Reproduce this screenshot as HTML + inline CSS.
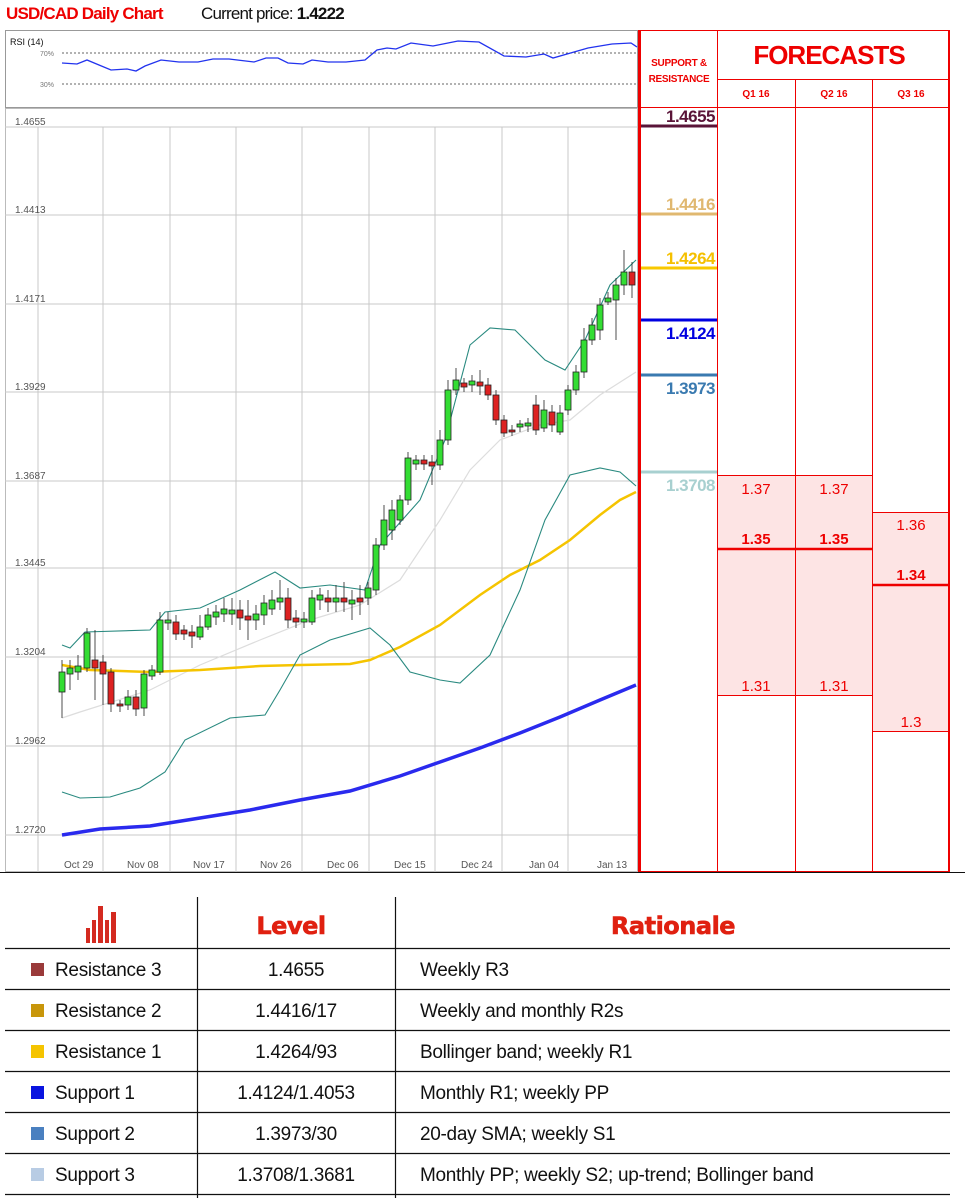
<!DOCTYPE html>
<html><head><meta charset="utf-8"><style>
body{margin:0;background:#fff;width:965px;height:1198px;overflow:hidden;font-family:"Liberation Sans",sans-serif;position:relative}
.a{position:absolute}
</style></head><body>
<div class="a" style="left:6px;top:4px;font-size:17px;color:#e00;font-weight:bold;letter-spacing:-0.8px">USD/CAD Daily Chart</div>
<div class="a" style="left:201px;top:4px;font-size:17px;color:#111;letter-spacing:-0.8px">Current price: <b>1.4222</b></div>
<svg class="a" style="left:0;top:0" width="965" height="880" xmlns="http://www.w3.org/2000/svg">
<rect x="5.5" y="30.5" width="632" height="77" fill="#fff" stroke="#999"/>
<text x="10" y="45" font-size="9" font-family="Liberation Sans" fill="#111">RSI (14)</text>
<text x="40" y="56" font-size="7" fill="#777" font-family="Liberation Sans">70%</text>
<text x="40" y="87" font-size="7" fill="#777" font-family="Liberation Sans">30%</text>
<line x1="62" y1="53" x2="637" y2="53" stroke="#666" stroke-dasharray="2,2"/>
<line x1="62" y1="84" x2="637" y2="84" stroke="#666" stroke-dasharray="2,2"/>
<polyline fill="none" stroke="#2233ee" stroke-width="1.3" points="62,63 77,64 87,60 99,65 111,70 127,69 136,71 145,66 161,60 179,62 198,62 213,59 229,59 254,62 266,58 278,58 288,63 303,64 312,60 328,62 346,62 365,60 377,50 387,48 396,49 411,43 433,46 458,41 479,42 504,56 526,57 544,54 553,58 588,48 612,44 631,43 637,47"/>
<rect x="5.5" y="108.5" width="632" height="763" fill="#fff" stroke="#bbb"/>
<g stroke="#c8c8c8" stroke-width="1">
<line x1="5" y1="127" x2="637" y2="127"/><line x1="5" y1="215" x2="637" y2="215"/><line x1="5" y1="304" x2="637" y2="304"/><line x1="5" y1="392" x2="637" y2="392"/><line x1="5" y1="481" x2="637" y2="481"/><line x1="5" y1="568" x2="637" y2="568"/><line x1="5" y1="657" x2="637" y2="657"/><line x1="5" y1="746" x2="637" y2="746"/><line x1="5" y1="835" x2="637" y2="835"/>
<line x1="38" y1="127" x2="38" y2="872"/><line x1="103" y1="127" x2="103" y2="872"/><line x1="170" y1="127" x2="170" y2="872"/><line x1="236" y1="127" x2="236" y2="872"/><line x1="302" y1="127" x2="302" y2="872"/><line x1="369" y1="127" x2="369" y2="872"/><line x1="435" y1="127" x2="435" y2="872"/><line x1="502" y1="127" x2="502" y2="872"/><line x1="568" y1="127" x2="568" y2="872"/>
</g>
<g font-size="10" fill="#555" font-family="Liberation Sans">
<text x="15" y="125">1.4655</text><text x="15" y="213">1.4413</text><text x="15" y="302">1.4171</text><text x="15" y="390">1.3929</text><text x="15" y="479">1.3687</text><text x="15" y="566">1.3445</text><text x="15" y="655">1.3204</text><text x="15" y="744">1.2962</text><text x="15" y="833">1.2720</text>
<text x="64" y="868">Oct 29</text><text x="127" y="868">Nov 08</text><text x="193" y="868">Nov 17</text><text x="260" y="868">Nov 26</text><text x="327" y="868">Dec 06</text><text x="394" y="868">Dec 15</text><text x="461" y="868">Dec 24</text><text x="529" y="868">Jan 04</text><text x="597" y="868">Jan 13</text>
</g>
<polyline fill="none" stroke="#2a2aee" stroke-width="3.5" points="62,835 100,829 150,826 200,818 250,810 300,800 350,791 400,776 440,762 480,748 520,733 560,717 600,700 636,685"/>
<polyline fill="none" stroke="#ddd" stroke-width="1.2" points="62,718 80,712 150,690 200,665 260,640 310,620 360,605 400,580 440,520 470,470 500,440 540,425 570,420 600,395 636,372"/>
<polyline fill="none" stroke="#f5c400" stroke-width="2.5" points="62,665 90,670 150,672 200,670 260,666 300,665 350,664 370,660 400,647 440,625 480,595 510,575 540,560 570,540 600,515 620,500 636,492"/>
<polyline fill="none" stroke="#2a8a80" stroke-width="1.1" points="62,645 70,648 85,632 150,630 165,612 200,608 240,590 275,572 300,588 330,585 365,590 380,545 420,500 445,440 470,345 490,328 515,330 545,360 565,370 585,340 610,285 636,260"/>
<polyline fill="none" stroke="#2a8a80" stroke-width="1.1" points="62,792 80,798 110,797 140,788 165,772 185,740 230,718 265,715 280,690 300,655 330,640 370,628 390,645 410,672 440,680 460,683 490,655 520,590 545,520 570,475 600,468 620,472 636,486"/>
</svg>
<svg class="a" style="left:0;top:0" width="640" height="880" xmlns="http://www.w3.org/2000/svg">
<g stroke="#222" stroke-width="0.8">
<line x1="62" y1="660" x2="62" y2="718"/><rect x="59" y="672" width="6" height="20" fill="#3d3"/>
<line x1="70" y1="660" x2="70" y2="690"/><rect x="67" y="668" width="6" height="6" fill="#3d3"/>
<line x1="78" y1="655" x2="78" y2="680"/><rect x="75" y="666" width="6" height="6" fill="#3d3"/>
<line x1="87" y1="628" x2="87" y2="672"/><rect x="84" y="633" width="6" height="35" fill="#3d3"/>
<line x1="95" y1="630" x2="95" y2="700"/><rect x="92" y="660" width="6" height="8" fill="#d22"/>
<line x1="103" y1="655" x2="103" y2="705"/><rect x="100" y="662" width="6" height="12" fill="#d22"/>
<line x1="111" y1="668" x2="111" y2="712"/><rect x="108" y="672" width="6" height="32" fill="#d22"/>
<line x1="120" y1="700" x2="120" y2="712"/><rect x="117" y="704" width="6" height="2" fill="#d22"/>
<line x1="128" y1="690" x2="128" y2="710"/><rect x="125" y="697" width="6" height="8" fill="#3d3"/>
<line x1="136" y1="690" x2="136" y2="716"/><rect x="133" y="697" width="6" height="12" fill="#d22"/>
<line x1="144" y1="670" x2="144" y2="716"/><rect x="141" y="674" width="6" height="34" fill="#3d3"/>
<line x1="152" y1="665" x2="152" y2="680"/><rect x="149" y="670" width="6" height="6" fill="#3d3"/>
<line x1="160" y1="612" x2="160" y2="675"/><rect x="157" y="620" width="6" height="52" fill="#3d3"/>
<line x1="168" y1="612" x2="168" y2="630"/><rect x="165" y="620" width="6" height="3" fill="#3d3"/>
<line x1="176" y1="615" x2="176" y2="640"/><rect x="173" y="622" width="6" height="12" fill="#d22"/>
<line x1="184" y1="625" x2="184" y2="640"/><rect x="181" y="630" width="6" height="4" fill="#d22"/>
<line x1="192" y1="625" x2="192" y2="648"/><rect x="189" y="632" width="6" height="4" fill="#d22"/>
<line x1="200" y1="615" x2="200" y2="640"/><rect x="197" y="627" width="6" height="10" fill="#3d3"/>
<line x1="208" y1="608" x2="208" y2="630"/><rect x="205" y="615" width="6" height="12" fill="#3d3"/>
<line x1="216" y1="605" x2="216" y2="625"/><rect x="213" y="612" width="6" height="5" fill="#3d3"/>
<line x1="224" y1="598" x2="224" y2="622"/><rect x="221" y="609" width="6" height="5" fill="#3d3"/>
<line x1="232" y1="598" x2="232" y2="625"/><rect x="229" y="610" width="6" height="4" fill="#3d3"/>
<line x1="240" y1="600" x2="240" y2="630"/><rect x="237" y="610" width="6" height="8" fill="#d22"/>
<line x1="248" y1="600" x2="248" y2="640"/><rect x="245" y="616" width="6" height="4" fill="#d22"/>
<line x1="256" y1="605" x2="256" y2="630"/><rect x="253" y="614" width="6" height="6" fill="#3d3"/>
<line x1="264" y1="595" x2="264" y2="625"/><rect x="261" y="603" width="6" height="12" fill="#3d3"/>
<line x1="272" y1="590" x2="272" y2="615"/><rect x="269" y="600" width="6" height="9" fill="#3d3"/>
<line x1="280" y1="580" x2="280" y2="610"/><rect x="277" y="598" width="6" height="4" fill="#3d3"/>
<line x1="288" y1="588" x2="288" y2="628"/><rect x="285" y="598" width="6" height="22" fill="#d22"/>
<line x1="296" y1="610" x2="296" y2="628"/><rect x="293" y="618" width="6" height="4" fill="#d22"/>
<line x1="304" y1="612" x2="304" y2="628"/><rect x="301" y="619" width="6" height="3" fill="#3d3"/>
<line x1="312" y1="590" x2="312" y2="625"/><rect x="309" y="598" width="6" height="24" fill="#3d3"/>
<line x1="320" y1="588" x2="320" y2="610"/><rect x="317" y="595" width="6" height="5" fill="#3d3"/>
<line x1="328" y1="590" x2="328" y2="612"/><rect x="325" y="598" width="6" height="4" fill="#d22"/>
<line x1="336" y1="585" x2="336" y2="612"/><rect x="333" y="598" width="6" height="4" fill="#3d3"/>
<line x1="344" y1="582" x2="344" y2="612"/><rect x="341" y="598" width="6" height="4" fill="#d22"/>
<line x1="352" y1="590" x2="352" y2="620"/><rect x="349" y="600" width="6" height="4" fill="#3d3"/>
<line x1="360" y1="585" x2="360" y2="615"/><rect x="357" y="598" width="6" height="4" fill="#d22"/>
<line x1="368" y1="582" x2="368" y2="605"/><rect x="365" y="588" width="6" height="10" fill="#3d3"/>
<line x1="376" y1="538" x2="376" y2="595"/><rect x="373" y="545" width="6" height="45" fill="#3d3"/>
<line x1="384" y1="505" x2="384" y2="550"/><rect x="381" y="520" width="6" height="25" fill="#3d3"/>
<line x1="392" y1="500" x2="392" y2="540"/><rect x="389" y="510" width="6" height="20" fill="#3d3"/>
<line x1="400" y1="495" x2="400" y2="525"/><rect x="397" y="500" width="6" height="20" fill="#3d3"/>
<line x1="408" y1="452" x2="408" y2="505"/><rect x="405" y="458" width="6" height="42" fill="#3d3"/>
<line x1="416" y1="455" x2="416" y2="470"/><rect x="413" y="460" width="6" height="4" fill="#3d3"/>
<line x1="424" y1="455" x2="424" y2="470"/><rect x="421" y="460" width="6" height="4" fill="#d22"/>
<line x1="432" y1="455" x2="432" y2="485"/><rect x="429" y="462" width="6" height="4" fill="#d22"/>
<line x1="440" y1="430" x2="440" y2="470"/><rect x="437" y="440" width="6" height="25" fill="#3d3"/>
<line x1="448" y1="380" x2="448" y2="445"/><rect x="445" y="390" width="6" height="50" fill="#3d3"/>
<line x1="456" y1="368" x2="456" y2="395"/><rect x="453" y="380" width="6" height="10" fill="#3d3"/>
<line x1="464" y1="378" x2="464" y2="392"/><rect x="461" y="383" width="6" height="4" fill="#d22"/>
<line x1="472" y1="375" x2="472" y2="392"/><rect x="469" y="381" width="6" height="4" fill="#3d3"/>
<line x1="480" y1="370" x2="480" y2="395"/><rect x="477" y="382" width="6" height="4" fill="#d22"/>
<line x1="488" y1="378" x2="488" y2="400"/><rect x="485" y="385" width="6" height="10" fill="#d22"/>
<line x1="496" y1="390" x2="496" y2="425"/><rect x="493" y="395" width="6" height="25" fill="#d22"/>
<line x1="504" y1="415" x2="504" y2="437"/><rect x="501" y="420" width="6" height="13" fill="#d22"/>
<line x1="512" y1="425" x2="512" y2="436"/><rect x="509" y="430" width="6" height="2" fill="#d22"/>
<line x1="520" y1="420" x2="520" y2="432"/><rect x="517" y="424" width="6" height="3" fill="#3d3"/>
<line x1="528" y1="418" x2="528" y2="432"/><rect x="525" y="423" width="6" height="3" fill="#3d3"/>
<line x1="536" y1="395" x2="536" y2="435"/><rect x="533" y="405" width="6" height="25" fill="#d22"/>
<line x1="544" y1="400" x2="544" y2="432"/><rect x="541" y="410" width="6" height="18" fill="#3d3"/>
<line x1="552" y1="405" x2="552" y2="432"/><rect x="549" y="412" width="6" height="13" fill="#d22"/>
<line x1="560" y1="405" x2="560" y2="435"/><rect x="557" y="413" width="6" height="19" fill="#3d3"/>
<line x1="568" y1="385" x2="568" y2="415"/><rect x="565" y="390" width="6" height="20" fill="#3d3"/>
<line x1="576" y1="365" x2="576" y2="395"/><rect x="573" y="372" width="6" height="18" fill="#3d3"/>
<line x1="584" y1="328" x2="584" y2="378"/><rect x="581" y="340" width="6" height="32" fill="#3d3"/>
<line x1="592" y1="318" x2="592" y2="345"/><rect x="589" y="325" width="6" height="15" fill="#3d3"/>
<line x1="600" y1="298" x2="600" y2="340"/><rect x="597" y="305" width="6" height="25" fill="#3d3"/>
<line x1="608" y1="292" x2="608" y2="305"/><rect x="605" y="298" width="6" height="4" fill="#3d3"/>
<line x1="616" y1="278" x2="616" y2="340"/><rect x="613" y="285" width="6" height="15" fill="#3d3"/>
<line x1="624" y1="250" x2="624" y2="295"/><rect x="621" y="272" width="6" height="13" fill="#3d3"/>
<line x1="632" y1="262" x2="632" y2="298"/><rect x="629" y="272" width="6" height="13" fill="#d22"/>
</g>
</svg>
<svg class="a" style="left:0;top:0" width="965" height="880" xmlns="http://www.w3.org/2000/svg" font-family="Liberation Sans">
<rect x="717" y="475" width="155" height="220" fill="#fde4e4"/>
<rect x="872" y="512" width="77" height="219" fill="#fde4e4"/>
<g stroke="#e00" stroke-width="1" fill="none">
<rect x="640.5" y="30.5" width="309" height="841"/>
<line x1="717.5" y1="30" x2="717.5" y2="872"/>
<line x1="795.5" y1="79" x2="795.5" y2="872"/>
<line x1="872.5" y1="79" x2="872.5" y2="872"/>
<line x1="717" y1="79.5" x2="950" y2="79.5"/>
<line x1="640" y1="107.5" x2="950" y2="107.5"/>
<line x1="717" y1="475.5" x2="872" y2="475.5"/>
<line x1="717" y1="695.5" x2="872" y2="695.5"/>
<line x1="872" y1="512.5" x2="950" y2="512.5"/>
<line x1="872" y1="731.5" x2="950" y2="731.5"/>
</g>
<line x1="639" y1="30" x2="639" y2="872" stroke="#e00" stroke-width="2"/>
<line x1="949" y1="30" x2="949" y2="872" stroke="#e00" stroke-width="2"/>
<line x1="717" y1="549" x2="872" y2="549" stroke="#e00" stroke-width="2.5"/>
<line x1="872" y1="585" x2="950" y2="585" stroke="#e00" stroke-width="2.5"/>
<text x="679" y="66" font-size="10" fill="#e00" font-weight="bold" text-anchor="middle" letter-spacing="-0.3">SUPPORT &amp;</text>
<text x="679" y="82" font-size="10" fill="#e00" font-weight="bold" text-anchor="middle" letter-spacing="-0.3">RESISTANCE</text>
<text x="829" y="64" font-size="26" fill="#e00" font-weight="bold" text-anchor="middle" letter-spacing="-1">FORECASTS</text>
<text x="756" y="97" font-size="10" fill="#e00" font-weight="bold" text-anchor="middle">Q1 16</text>
<text x="834" y="97" font-size="10" fill="#e00" font-weight="bold" text-anchor="middle">Q2 16</text>
<text x="911" y="97" font-size="10" fill="#e00" font-weight="bold" text-anchor="middle">Q3 16</text>
<g font-size="17" text-anchor="end" font-weight="bold" letter-spacing="-0.5">
<line x1="641" y1="126" x2="717" y2="126" stroke="#5a1438" stroke-width="3"/><text x="715" y="122" fill="#5a1438">1.4655</text>
<line x1="641" y1="214" x2="717" y2="214" stroke="#e0b870" stroke-width="3"/><text x="715" y="210" fill="#e0b870">1.4416</text>
<line x1="641" y1="268" x2="717" y2="268" stroke="#f8c800" stroke-width="3"/><text x="715" y="264" fill="#f5c000">1.4264</text>
<line x1="641" y1="320" x2="717" y2="320" stroke="#0000e0" stroke-width="3"/><text x="715" y="339" fill="#0000e0">1.4124</text>
<line x1="641" y1="375" x2="717" y2="375" stroke="#3a7ab0" stroke-width="3"/><text x="715" y="394" fill="#3a7ab0">1.3973</text>
<line x1="641" y1="472" x2="717" y2="472" stroke="#a8d0d0" stroke-width="3"/><text x="715" y="491" fill="#a8d0d0">1.3708</text>
</g>
<g font-size="15" fill="#e00" text-anchor="middle">
<text x="756" y="494">1.37</text><text x="834" y="494">1.37</text>
<text x="756" y="544" font-weight="bold">1.35</text><text x="834" y="544" font-weight="bold">1.35</text>
<text x="756" y="691">1.31</text><text x="834" y="691">1.31</text>
<text x="911" y="530">1.36</text><text x="911" y="580" font-weight="bold">1.34</text><text x="911" y="727">1.3</text>
</g>
<line x1="0" y1="872.5" x2="965" y2="872.5" stroke="#111" stroke-width="1"/>
</svg>
<svg class="a" style="left:0;top:880px" width="965" height="318" xmlns="http://www.w3.org/2000/svg" font-family="Liberation Sans">
<g fill="#d42a20"><rect x="86" y="48" width="4" height="15"/><rect x="92" y="40" width="4" height="23"/><rect x="98" y="26" width="5" height="37"/><rect x="105" y="40" width="4" height="23"/><rect x="111" y="32" width="5" height="31"/></g>
<text x="291" y="54" font-size="24" font-weight="900" fill="#e02010" text-anchor="middle" font-family="DejaVu Sans" letter-spacing="-0.5" stroke="#e02010" stroke-width="0.6">Level</text>
<text x="673" y="54" font-size="24" font-weight="900" fill="#e02010" text-anchor="middle" font-family="DejaVu Sans" letter-spacing="-0.5" stroke="#e02010" stroke-width="0.6">Rationale</text>
<g stroke="#111" stroke-width="1.2">
<line x1="197.5" y1="17" x2="197.5" y2="318"/><line x1="395.5" y1="17" x2="395.5" y2="318"/>
<line x1="5" y1="68.5" x2="950" y2="68.5"/><line x1="5" y1="109.5" x2="950" y2="109.5"/><line x1="5" y1="150.5" x2="950" y2="150.5"/><line x1="5" y1="191.5" x2="950" y2="191.5"/><line x1="5" y1="232.5" x2="950" y2="232.5"/><line x1="5" y1="273.5" x2="950" y2="273.5"/><line x1="5" y1="314.5" x2="950" y2="314.5"/>
</g>
<g font-size="19" fill="#111" letter-spacing="-0.3">
<rect x="31" y="83" width="13" height="13" fill="#9a3a3a"/><text x="55" y="96">Resistance 3</text><text x="296" y="96" text-anchor="middle">1.4655</text><text x="420" y="96">Weekly R3</text>
<rect x="31" y="124" width="13" height="13" fill="#c8960a"/><text x="55" y="137">Resistance 2</text><text x="296" y="137" text-anchor="middle">1.4416/17</text><text x="420" y="137">Weekly and monthly R2s</text>
<rect x="31" y="165" width="13" height="13" fill="#f5c400"/><text x="55" y="178">Resistance 1</text><text x="296" y="178" text-anchor="middle">1.4264/93</text><text x="420" y="178">Bollinger band; weekly R1</text>
<rect x="31" y="206" width="13" height="13" fill="#0a14e0"/><text x="55" y="219">Support 1</text><text x="296" y="219" text-anchor="middle">1.4124/1.4053</text><text x="420" y="219">Monthly R1; weekly PP</text>
<rect x="31" y="247" width="13" height="13" fill="#4a80c0"/><text x="55" y="260">Support 2</text><text x="296" y="260" text-anchor="middle">1.3973/30</text><text x="420" y="260">20-day SMA; weekly S1</text>
<rect x="31" y="288" width="13" height="13" fill="#b8cce4"/><text x="55" y="301">Support 3</text><text x="296" y="301" text-anchor="middle">1.3708/1.3681</text><text x="420" y="301">Monthly PP; weekly S2; up-trend; Bollinger band</text>
</g>
</svg>
</body></html>
